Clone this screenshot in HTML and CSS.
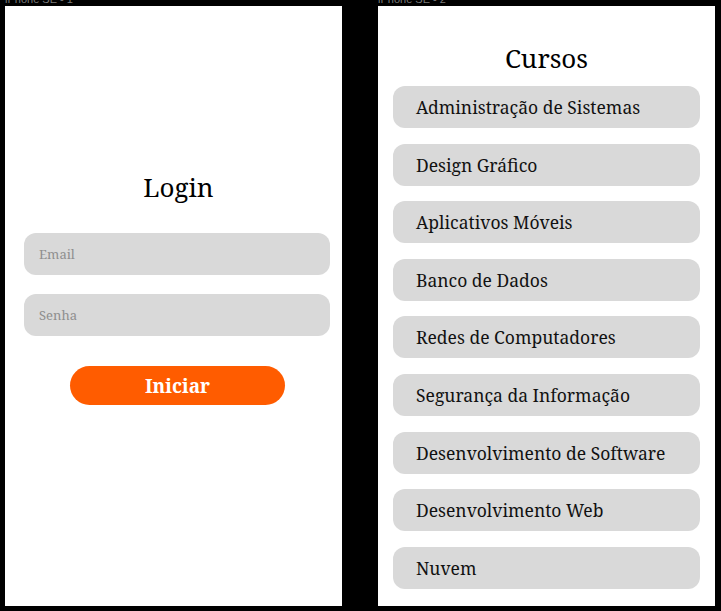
FILE: index.html
```html
<!DOCTYPE html>
<html lang="pt-BR">
<head>
<meta charset="utf-8">
<title>Protótipo</title>
<link rel="stylesheet" href="styles.css">
</head>
<body>
<main class="canvas">
  <section class="artboard">
    <div class="label">iPhone SE - 1</div>
    <div class="frame login">
      <h1 class="title login-title">Login</h1>
      <div class="field">Email</div>
      <div class="field">Senha</div>
      <button class="btn">Iniciar</button>
    </div>
  </section>
  <section class="artboard">
    <div class="label">iPhone SE - 2</div>
    <div class="frame cursos">
      <h1 class="title cursos-title">Cursos</h1>
      <ul class="list">
        <li class="item">Administração de Sistemas</li>
        <li class="item">Design Gráfico</li>
        <li class="item">Aplicativos Móveis</li>
        <li class="item">Banco de Dados</li>
        <li class="item">Redes de Computadores</li>
        <li class="item">Segurança da Informação</li>
        <li class="item">Desenvolvimento de Software</li>
        <li class="item">Desenvolvimento Web</li>
        <li class="item">Nuvem</li>
      </ul>
    </div>
  </section>
</main>
</body>
</html>
```

FILE: styles.css
```css
html, body {
  margin: 0;
  padding: 0;
  background: #000;
}
body {
  width: 721px;
  height: 611px;
  overflow: hidden;
  font-family: "Noto Serif", "DejaVu Serif", "Liberation Serif", serif;
}
.canvas {
  display: flex;
  gap: 36px;
  padding-left: 5px;
}
.artboard {
  display: flex;
  flex-direction: column;
}
.label {
  font-family: "Liberation Sans", sans-serif;
  font-size: 11px;
  line-height: 12px;
  height: 12px;
  margin-top: -7px;
  margin-bottom: 1px;
  color: #7a7a7a;
}
.frame {
  width: 337px;
  height: 600px;
  background: #fff;
  box-sizing: border-box;
  display: flex;
  flex-direction: column;
}
.title {
  margin: 0;
  font-weight: 400;
  color: #000;
  text-align: center;
}
.login {
  padding: 0 11px 0 19px;
}
.login-title {
  font-size: 26px;
  line-height: 32px;
  margin-top: 165px;
  margin-bottom: 30px;
  padding-left: 2px;
}
.field {
  height: 42px;
  border-radius: 12px;
  background: #d9d9d9;
  color: #8e8e8e;
  font-size: 13px;
  line-height: 42px;
  padding-left: 15px;
  margin-right: 1px;
  margin-bottom: 19px;
}
.btn {
  align-self: center;
  width: 215px;
  height: 39px;
  margin-top: 11px;
  border: 0;
  border-radius: 20px;
  background: #ff5c00;
  color: #fff;
  font-family: inherit;
  font-weight: 700;
  font-size: 19px;
  padding: 0;
}
.cursos {
  padding: 0 15px;
}
.cursos-title {
  font-size: 26px;
  line-height: 32px;
  margin-top: 36px;
  margin-bottom: 12px;
}
.list {
  list-style: none;
  margin: 0;
  padding: 0;
  display: flex;
  flex-direction: column;
  gap: 15.6px;
}
.item {
  height: 42px;
  border-radius: 12px;
  background: #d9d9d9;
  color: #111;
  font-size: 17.5px;
  line-height: 42px;
  padding-left: 23px;
}
```
